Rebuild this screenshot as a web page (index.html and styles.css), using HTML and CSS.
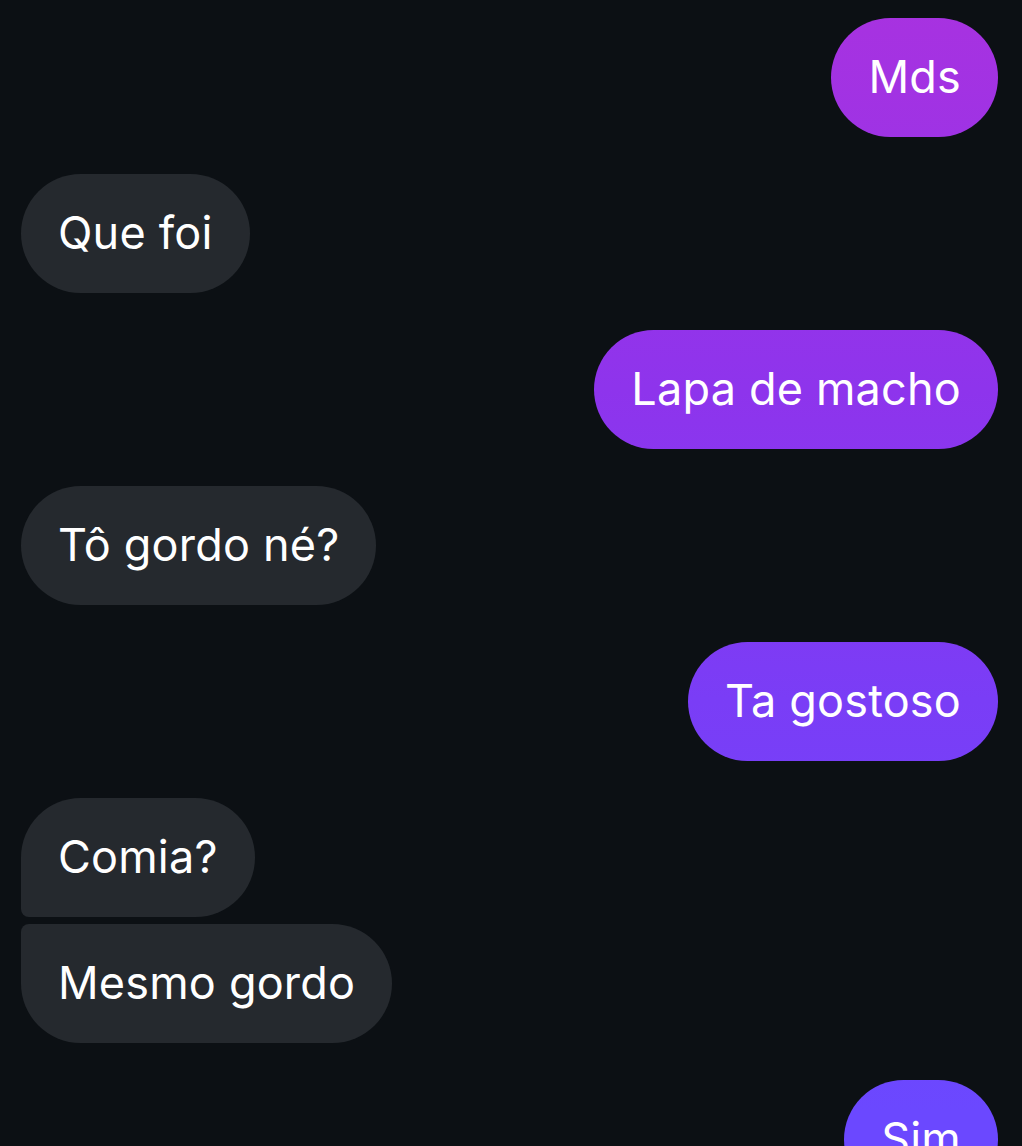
FILE: index.html
```html
<!DOCTYPE html>
<html lang="pt">
  <head>
    <meta charset="UTF-8" />
    <meta name="viewport" content="width=device-width, initial-scale=1.0" />
    <title>Mensagens</title>
    <link rel="stylesheet" href="styles.css">
  </head>
  <body>
    <div class="thread">
      <div class="msg sent"><span class="bubble">Mds</span></div>
      <div class="msg received"><span class="bubble">Que foi</span></div>
      <div class="msg sent"><span class="bubble">Lapa de macho</span></div>
      <div class="msg received"><span class="bubble">Tô gordo né?</span></div>
      <div class="msg sent"><span class="bubble">Ta gostoso</span></div>
      <div class="group">
        <div class="msg received"><span class="bubble first">Comia?</span></div>
        <div class="msg received"><span class="bubble last">Mesmo gordo</span></div>
      </div>
      <div class="msg sent"><span class="bubble">Sim</span></div>
    </div>
  </body>
</html>
```

FILE: styles.css
```css
html {
  overflow: hidden;
}
body {
  margin: 0;
  background-color: #0c1014;
  font-family: "Inter", "Noto Sans", sans-serif;
  color: #ffffff;
}
.thread {
  display: flex;
  flex-direction: column;
  gap: 37px;
  padding: 18px 24px 40px 21px;
}
.group {
  display: flex;
  flex-direction: column;
  gap: 7px;
}
.msg {
  display: flex;
}
.msg.sent {
  justify-content: flex-end;
}
.msg.received {
  justify-content: flex-start;
}
.bubble {
  display: flex;
  align-items: center;
  height: 119px;
  box-sizing: border-box;
  padding: 0 37px 2px 37px;
  border-radius: 60px;
  font-size: 45px;
  letter-spacing: 0.2px;
  white-space: nowrap;
}
.received .bubble {
  background-color: #25292e;
}
.sent .bubble {
  background: linear-gradient(to bottom, #a832e0 0px, #8e34ec 390px, #7a3df6 700px, #6b48ff 1110px) fixed;
}
.bubble.first {
  border-bottom-left-radius: 8px;
}
.bubble.last {
  border-top-left-radius: 8px;
}
```
